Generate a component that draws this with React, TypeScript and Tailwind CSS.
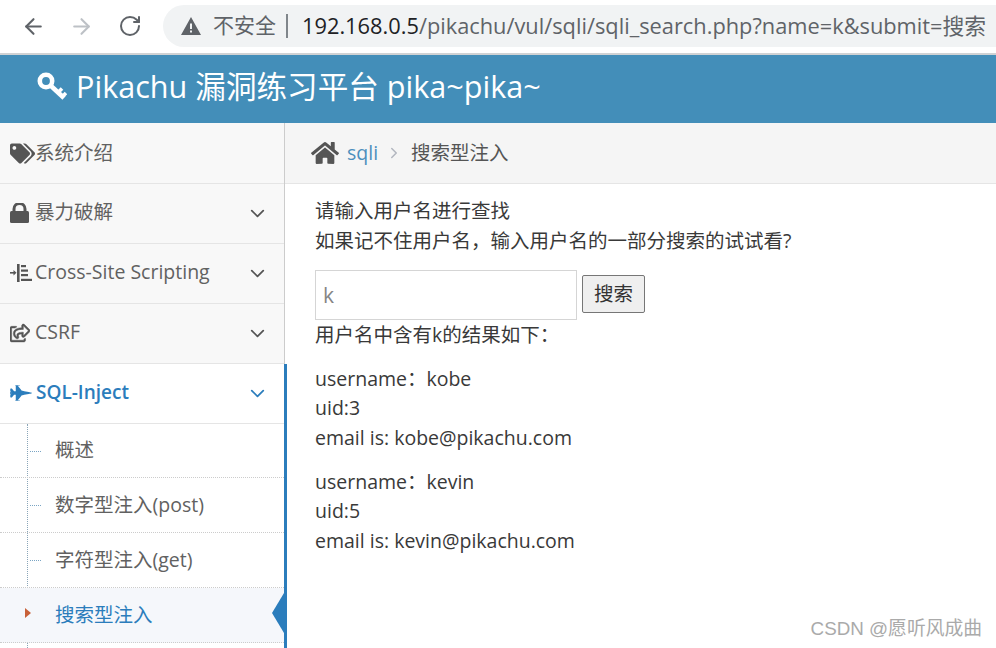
import { ArrowLeft, ArrowRight, RotateCw, ChevronDown, ChevronRight } from "lucide-react";
import { FaFighterJet, FaHome, FaRegShareSquare, FaTags } from "react-icons/fa";
import type { ReactNode } from "react";

const font = "font-['Open_Sans','Noto_Sans_CJK_SC',sans-serif]";

const IndentIcon = () => (
  <svg width="22" height="18" viewBox="0 0 22 18" fill="#555" className="mb-[2px]">
    <rect x="7" y="0" width="2.6" height="18" />
    <rect x="0" y="8" width="5" height="1.6" />
    <polygon points="3.5,6 6.5,8.8 3.5,11.6" />
    <rect x="11" y="1" width="5" height="2.2" />
    <rect x="11" y="5.5" width="7" height="2.2" />
    <rect x="11" y="10" width="7" height="2.2" />
    <rect x="11" y="14.8" width="11" height="2.2" />
  </svg>
);

const LockIcon = () => (
  <svg width="19" height="20" viewBox="0 0 19 20" fill="#555" className="mb-[2px]">
    <rect x="0" y="8" width="19" height="12" rx="1.5" />
    <path d="M4 9 V6 A5.5 5.5 0 0 1 15 6 V9" fill="none" stroke="#555" strokeWidth="3" />
  </svg>
);

const KeyIcon = () => (
  <svg width="30" height="30" viewBox="0 0 30 30" fill="none" stroke="#fff" className="mr-[9px]">
    <circle cx="9" cy="9" r="6.2" strokeWidth="4.6" />
    <path d="M13 13 L27 26" strokeWidth="4.6" />
    <path d="M21 20.5 L25 16.5 M25.5 24.5 L29 21" strokeWidth="3.6" />
  </svg>
);

const WarningIcon = () => (
  <svg width="20" height="18" viewBox="0 0 20 18" fill="#5f6368">
    <path d="M10 0 L20 18 L0 18 Z M9 6.5 V12 H11 V6.5 Z M9 13.5 V15.5 H11 V13.5 Z" fillRule="evenodd" />
  </svg>
);

const NavItem = ({ icon, label, arrow = true, first = false }: { icon: ReactNode; label: string; arrow?: boolean; first?: boolean }) => (
  <div className={`flex items-center border-b border-[#e5e5e5] bg-[#f8f8f8] pl-[10px] pr-[15px] text-[#616161] ${first ? "h-[61px]" : "h-[60px]"}`}>
    <span className="flex w-[25px] shrink-0 items-center">{icon}</span>
    <span className={`flex-1 text-[19.5px] ${first ? "pb-[1px]" : "pb-[3px]"}`}>{label}</span>
    {arrow && <ChevronDown size={23} strokeWidth={1.8} className="mb-[1px] text-[#555]" />}
  </div>
);

const SubItem = ({ label, active = false, height }: { label: string; active?: boolean; height: string }) => (
  <div className={`relative flex items-center border-b border-dotted border-[#ccc] pb-[1px] pl-[55px] text-[19.5px] ${height} ${active ? "bg-[#f5f7fb] text-[#2b7dbc]" : "text-[#616161]"}`}>
    {label}
    {active ? (
      <>
        <span className="absolute left-[25px] top-[20px] h-0 w-0 border-y-[5.5px] border-l-[6px] border-y-transparent border-l-[#c86139]" />
        <span className="absolute right-0 top-[5px] h-0 w-0 border-y-[20px] border-r-[12px] border-y-transparent border-r-[#2b7dbc]" />
      </>
    ) : (
      <span className="absolute left-[30px] top-1/2 w-[11px] border-t border-dotted border-[#7aa5c4]" />
    )}
  </div>
);

const Sidebar = () => (
  <aside className="w-[285px] shrink-0 border-r border-[#ccc] bg-white">
    <NavItem first icon={<FaTags size={25} color="#555" />} label="系统介绍" arrow={false} />
    <NavItem icon={<LockIcon />} label="暴力破解" />
    <NavItem icon={<IndentIcon />} label="Cross-Site Scripting" />
    <NavItem icon={<FaRegShareSquare size={20} color="#555" stroke="#555" strokeWidth={14} className="mb-[2px]" />} label="CSRF" />
    <div className="relative mr-[-3px] h-[400px] border-r-[3px] border-[#2b7dbc] bg-white">
      <div className="flex h-[60px] items-center border-b border-[#e5e5e5] pl-[10px] pr-[15px] text-[#2b7dbc]">
        <span className="flex w-[26px] shrink-0 items-center">
          <FaFighterJet size={22} className="mb-[1px]" />
        </span>
        <span className="flex-1 pb-[3px] text-[19px] font-semibold">SQL-Inject</span>
        <ChevronDown size={23} strokeWidth={1.8} className="mb-[1px]" />
      </div>
      <span className="absolute bottom-0 left-[27px] top-[60px] border-l border-dotted border-[#8aa5b8]" />
      <SubItem label="概述" height="h-[54px]" />
      <SubItem label="数字型注入(post)" height="h-[55px]" />
      <SubItem label="字符型注入(get)" height="h-[55px]" />
      <SubItem label="搜索型注入" active height="h-[55px]" />
    </div>
  </aside>
);

const Result = ({ name }: { name: string }) => (
  <div className="mt-[14.4px] leading-[29.5px]">
    <p>username：{name}</p>
    <p>uid:{name === "kobe" ? 3 : 5}</p>
    <p>email is: {name}@pikachu.com</p>
  </div>
);

export default function App() {
  return (
    <div className={`relative h-[648px] w-[996px] overflow-hidden bg-white ${font}`}>
      {/* browser toolbar */}
      <div className="flex h-[55px] items-center border-b-2 border-[#d0d2d4] pb-[1px] pl-[21px]">
        <ArrowLeft size={25} strokeWidth={2} className="text-[#5f6368]" />
        <ArrowRight size={25} strokeWidth={2} className="ml-[23px] text-[#bdc1c6]" />
        <RotateCw size={24} strokeWidth={2} className="ml-[24px] text-[#5f6368]" />
        <div className="ml-[21px] flex h-[42px] flex-1 items-center rounded-l-[21px] bg-[#f1f3f4] pl-[18px] text-[21px] whitespace-nowrap text-[#5f6368]">
          <WarningIcon />
          <span className="ml-[12px]">不安全</span>
          <span className="ml-[10px] mr-[14px] h-[24px] border-l-2 border-[#80868b]" />
          <span className="text-[21.8px] text-[#202124]">192.168.0.5</span>
          <span className="text-[21.8px]">/pikachu/vul/sqli/sqli_search.php?name=k&amp;submit=搜索</span>
        </div>
      </div>

      {/* app header */}
      <header className="flex h-[68px] items-center bg-[#438eb9] pb-[4px] pl-[37px] text-[30.6px] text-white">
        <KeyIcon />
        <span>Pikachu 漏洞练习平台 pika~pika~</span>
      </header>

      <div className="flex">
        <Sidebar />
        <main className="flex-1 text-[19.5px] text-[#393939]">
          <div className="flex h-[61px] items-center border-b border-[#e5e5e5] bg-[#f5f5f5] pl-[26px]">
            <FaHome size={28} color="#555" />
            <span className="ml-[8px] text-[#4c8fbd]">sqli</span>
            <ChevronRight size={18} className="ml-[7px] mr-[8px] text-[#b2b6bf]" />
            <span className="text-[#555]">搜索型注入</span>
          </div>
          <div className="pl-[30px] pt-[12px]">
            <p className="leading-[29.5px]">请输入用户名进行查找</p>
            <p className="leading-[29.5px]">如果记不住用户名，输入用户名的一部分搜索的试试看?</p>
            <div className="mt-[15px] flex items-center">
              <input
                readOnly
                value="k"
                className="h-[50px] w-[262px] border border-[#d5d5d5] bg-white pl-[7px] text-[21px] text-[#858585] outline-none"
              />
              <button className="ml-[5px] mt-[-2px] h-[38px] w-[63px] rounded-[2px] border border-[#767676] bg-[#efefef] text-[19.5px] text-[#333]">
                搜索
              </button>
            </div>
            <p className="leading-[29.5px]">用户名中含有k的结果如下：</p>
            <Result name="kobe" />
            <Result name="kevin" />
          </div>
        </main>
      </div>

      <span className="absolute bottom-[5px] right-[14px] font-['Liberation_Sans','Noto_Sans_CJK_SC',sans-serif] text-[18.8px] text-[#aaaaaa]">
        CSDN @愿听风成曲
      </span>
    </div>
  );
}
